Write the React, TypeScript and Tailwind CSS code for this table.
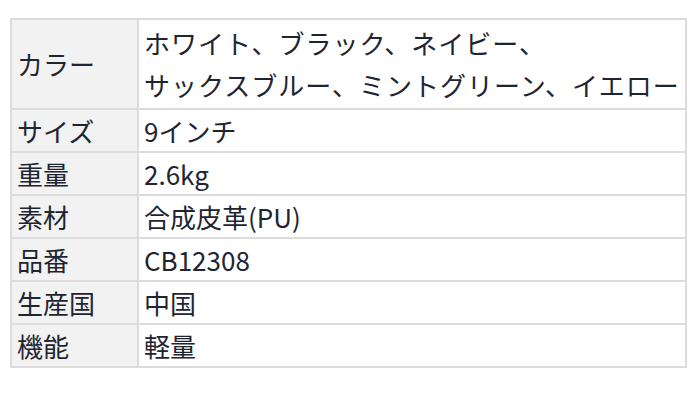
const rows: { label: string; value: React.ReactNode }[] = [
  {
    label: 'カラー',
    value: (
      <>
        ホワイト、ブラック、ネイビー、
        <br />
        サックスブルー、ミントグリーン、イエロー
      </>
    ),
  },
  { label: 'サイズ', value: '9インチ' },
  { label: '重量', value: '2.6kg' },
  { label: '素材', value: '合成皮革(PU)' },
  { label: '品番', value: 'CB12308' },
  { label: '生産国', value: '中国' },
  { label: '機能', value: '軽量' },
]

export default function App() {
  return (
    <main className="min-h-screen bg-white pt-[18px] pl-[10px] font-['Noto_Sans_CJK_JP','Noto_Sans',sans-serif] text-[#1e2531]">
      {/* スペック表 */}
      <table className="w-[677px] table-fixed border-collapse border-2 border-[#dcdcdc] text-[26px]">
        <colgroup>
          <col className="w-[127px]" />
          <col />
        </colgroup>
        <tbody>
          {rows.map((row, i) => (
            <tr key={row.label}>
              <th
                className={`border-2 border-[#dcdcdc] bg-[#f2f2f2] pl-[5px] text-left font-normal ${
                  i === 0 ? 'leading-[42px]' : 'leading-[41px]'
                }`}
              >
                {row.label}
              </th>
              <td
                className={`border-2 border-[#dcdcdc] pl-[5px] whitespace-nowrap ${
                  i === 0 ? 'py-[2px] leading-[42px] tracking-[1px]' : 'leading-[41px]'
                }`}
              >
                {row.value}
              </td>
            </tr>
          ))}
        </tbody>
      </table>
    </main>
  )
}
